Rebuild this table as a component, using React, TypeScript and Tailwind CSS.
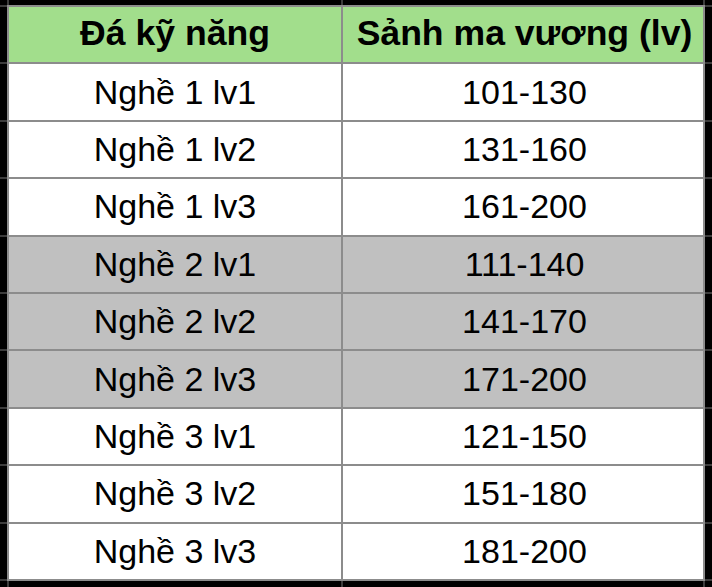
import React from "react";

const rows: { name: string; range: string; gray?: boolean }[] = [
  { name: "Nghề 1 lv1", range: "101-130" },
  { name: "Nghề 1 lv2", range: "131-160" },
  { name: "Nghề 1 lv3", range: "161-200" },
  { name: "Nghề 2 lv1", range: "111-140", gray: true },
  { name: "Nghề 2 lv2", range: "141-170", gray: true },
  { name: "Nghề 2 lv3", range: "171-200", gray: true },
  { name: "Nghề 3 lv1", range: "121-150" },
  { name: "Nghề 3 lv2", range: "151-180" },
  { name: "Nghề 3 lv3", range: "181-200" },
];

function Row({
  a,
  b,
  bg,
  bold,
}: {
  a: string;
  b: string;
  bg: string;
  bold?: boolean;
}) {
  const text = bold
    ? "text-[35.6px] font-bold"
    : "text-[34px] font-normal";
  return (
    <div className="flex h-[57.4px]">
      <div className="w-[7px] bg-black border-b-2 border-[#3c3c3c]" />
      <div className="w-[2px] bg-[#8c8c8c]" />
      <div
        className={`w-[332px] ${bg} border-b-2 border-[#8c8c8c] flex items-center justify-center ${text} text-black leading-none`}
      >
        <span className="pb-[1px]">{a}</span>
      </div>
      <div className="w-[2px] bg-[#8c8c8c]" />
      <div
        className={`w-[360px] ${bg} border-b-2 border-[#8c8c8c] flex items-center justify-center ${text} text-black leading-none`}
      >
        <span className="pb-[1px] pl-[3px]">{b}</span>
      </div>
      <div className="w-[2px] bg-[#8c8c8c]" />
      <div className="flex-1 bg-black border-b-2 border-[#3c3c3c]" />
    </div>
  );
}

function Strip({ h, line }: { h: string; line: string }) {
  return (
    <div className={`flex ${h}`}>
      <div className="w-[7px] bg-black" />
      <div className={`w-[2px] ${line}`} />
      <div className="w-[332px] bg-black" />
      <div className={`w-[2px] ${line}`} />
      <div className="w-[360px] bg-black" />
      <div className={`w-[2px] ${line}`} />
      <div className="flex-1 bg-black" />
    </div>
  );
}

export default function App() {
  return (
    <div
      className="w-[712px] h-[587px] bg-black flex flex-col overflow-hidden"
      style={{ fontFamily: '"Liberation Sans", Arial, sans-serif' }}
    >
      <Strip h="h-[5px]" line="bg-[#3c3c3c]" />
      <div className="flex h-[2px]">
        <div className="w-[7px] bg-[#3c3c3c]" />
        <div className="w-[698px] bg-[#8c8c8c]" />
        <div className="flex-1 bg-[#3c3c3c]" />
      </div>
      <Row a="Đá kỹ năng" b="Sảnh ma vương (lv)" bg="bg-[#a2de8c]" bold />
      {rows.map((r) => (
        <Row
          key={r.name}
          a={r.name}
          b={r.range}
          bg={r.gray ? "bg-[#c0c0c0]" : "bg-white"}
        />
      ))}
      <Strip h="flex-1" line="bg-[#3c3c3c]" />
    </div>
  );
}
